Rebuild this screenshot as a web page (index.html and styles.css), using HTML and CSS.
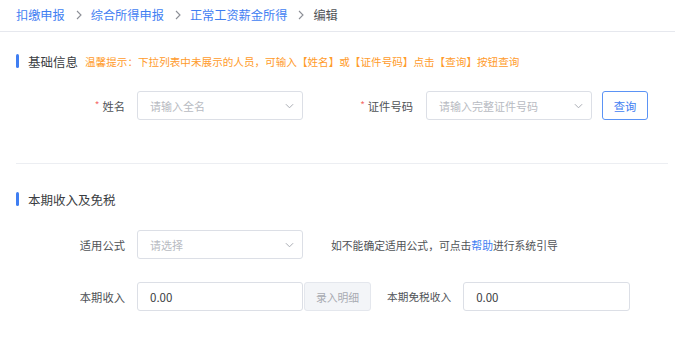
FILE: index.html
```html
<!DOCTYPE html>
<html lang="zh-CN">
<head>
  <meta charset="UTF-8" />
  <title>正常工资薪金所得 - 编辑</title>
  <link rel="stylesheet" href="styles.css">
</head>
<body>
  <div class="breadcrumb">
    <a class="crumb">扣缴申报</a>
    <svg class="sep" viewBox="0 0 6 10"><path d="M1 1l4 4-4 4" fill="none" stroke="#8c8f96" stroke-width="1.1"/></svg>
    <a class="crumb">综合所得申报</a>
    <svg class="sep" viewBox="0 0 6 10"><path d="M1 1l4 4-4 4" fill="none" stroke="#8c8f96" stroke-width="1.1"/></svg>
    <a class="crumb">正常工资薪金所得</a>
    <svg class="sep" viewBox="0 0 6 10"><path d="M1 1l4 4-4 4" fill="none" stroke="#8c8f96" stroke-width="1.1"/></svg>
    <span class="crumb current">编辑</span>
  </div>

  <div class="content">
    <!-- 基础信息 -->
    <div class="section-title">
      <span class="bar"></span>
      <span class="title-text">基础信息</span>
      <span class="tip">温馨提示：下拉列表中未展示的人员，可输入【姓名】或【证件号码】点击【查询】按钮查询</span>
    </div>

    <div class="row row-basic">
      <label class="label"><i>*</i>姓名</label>
      <div class="select">
        <span class="placeholder">请输入全名</span>
        <svg class="arrow" viewBox="0 0 10 6"><path d="M1 1l4 4 4-4" fill="none" stroke="#a8abb2" stroke-width="1.1"/></svg>
      </div>
      <label class="label label-id"><i>*</i>证件号码</label>
      <div class="select">
        <span class="placeholder">请输入完整证件号码</span>
        <svg class="arrow" viewBox="0 0 10 6"><path d="M1 1l4 4 4-4" fill="none" stroke="#a8abb2" stroke-width="1.1"/></svg>
      </div>
      <button class="btn-query">查询</button>
    </div>

    <div class="divider"></div>

    <!-- 本期收入及免税 -->
    <div class="section-title second">
      <span class="bar"></span>
      <span class="title-text">本期收入及免税</span>
    </div>

    <div class="row row-formula">
      <label class="label">适用公式</label>
      <div class="select">
        <span class="placeholder">请选择</span>
        <svg class="arrow" viewBox="0 0 10 6"><path d="M1 1l4 4 4-4" fill="none" stroke="#a8abb2" stroke-width="1.1"/></svg>
      </div>
      <span class="help">如不能确定适用公式，可点击<a class="link">帮助</a>进行系统引导</span>
    </div>

    <div class="row row-income">
      <label class="label">本期收入</label>
      <div class="input">0.00</div>
      <button class="btn-detail" disabled>录入明细</button>
      <label class="label-inline">本期免税收入</label>
      <div class="input wide">0.00</div>
    </div>
  </div>
</body>
</html>
```

FILE: styles.css
```css
* {
  margin: 0;
  padding: 0;
  box-sizing: border-box;
}

body {
  font-family: "Noto Sans CJK SC", "Noto Sans", sans-serif;
  background: #fff;
  color: #606266;
  width: 675px;
  height: 346px;
  overflow: hidden;
}

/* 面包屑 */
.breadcrumb {
  height: 32px;
  display: flex;
  align-items: center;
  padding: 0 0 2px 16px;
  border-bottom: 1px solid #e6e8ee;
  font-size: 12.2px;
}

.crumb {
  color: #3f7ef2;
}

.crumb.current {
  color: #505357;
}

.sep {
  width: 6px;
  height: 10px;
  margin: 0 9px 0 11px;
}

.content {
  padding: 0 7px 0 16px;
}

/* 区块标题 */
.section-title {
  display: flex;
  align-items: center;
  margin-top: 19px;
  height: 20px;
}

.section-title.second {
  margin-top: 25px;
}

.bar {
  width: 3px;
  height: 14px;
  border-radius: 2px;
  background: #3f7ef2;
  margin-right: 9px;
}

.title-text {
  font-size: 12.5px;
  color: #3a3d42;
}

.tip {
  font-size: 10.6px;
  color: #ff9b2b;
  margin-left: 7px;
}

/* 表单行 */
.row {
  display: flex;
  align-items: center;
  height: 29px;
}

.row-basic {
  margin-top: 20px;
}

.row-formula {
  margin-top: 21px;
}

.row-income {
  margin-top: 23px;
}

.label {
  width: 121px;
  padding-right: 12px;
  text-align: right;
  font-size: 11.3px;
  color: #505357;
}

.label i {
  font-style: normal;
  color: #f56c6c;
  margin-right: 3px;
  font-size: 10px;
  position: relative;
  top: -2px;
}

.label.label-id {
  width: 123px;
  padding-right: 13px;
}

.select,
.input {
  width: 166px;
  height: 29px;
  border: 1px solid #dcdfe6;
  border-radius: 3px;
  display: flex;
  align-items: center;
  padding: 0 8px 0 12px;
  font-size: 11px;
}

.select {
  justify-content: space-between;
}

.placeholder {
  color: #b8bbc2;
}

.arrow {
  width: 9px;
  height: 6px;
}

.input {
  color: #3a3d42;
  font-size: 11.5px;
}

.input.wide {
  width: 167px;
}

.btn-query {
  margin-left: 10px;
  width: 46px;
  height: 29px;
  border: 1px solid #5b93f5;
  border-radius: 3px;
  background: #fff;
  color: #3f7ef2;
  font-family: inherit;
  font-size: 11.3px;
}

.help {
  margin-left: 28px;
  font-size: 10.8px;
  color: #505357;
}

.link {
  color: #3f7ef2;
}

.btn-detail {
  margin-left: 1px;
  width: 67px;
  height: 29px;
  border: 1px solid #e4e7ed;
  border-radius: 3px;
  background: #f3f5f8;
  color: #a8abb2;
  font-family: inherit;
  font-size: 10.8px;
}

.label-inline {
  margin: 0 12px 0 16px;
  font-size: 10.7px;
  color: #505357;
}

.divider {
  height: 1px;
  background: #eceef2;
  margin: 43px 0 0 0;
}
```
